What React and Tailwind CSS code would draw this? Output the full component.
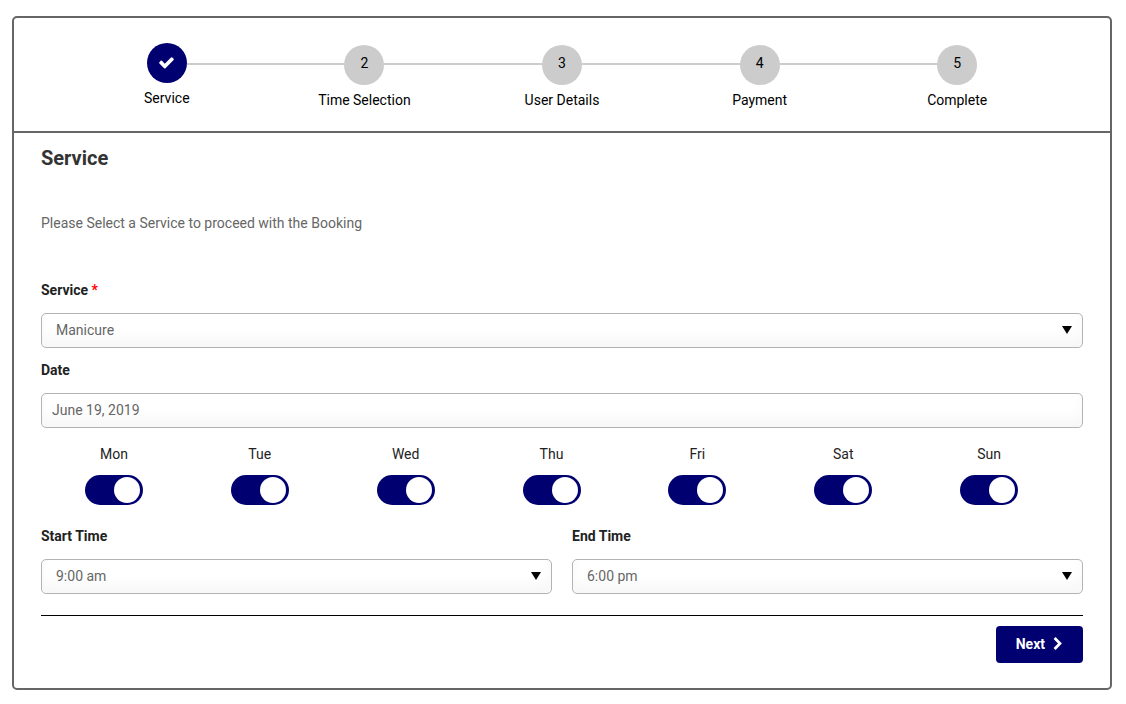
import React, { useState } from "react";

const steps = ["Service", "Time Selection", "User Details", "Payment", "Complete"];
const days = ["Mon", "Tue", "Wed", "Thu", "Fri", "Sat", "Sun"];
const times = ["8:00 am", "9:00 am", "10:00 am", "5:00 pm", "6:00 pm"];

const fieldClass =
  "block h-[35px] w-full appearance-none rounded-[5px] border border-[#b3b3b3] bg-white pb-0.5 text-sm text-[#666] shadow-[inset_0_-10px_12px_rgba(0,0,0,0.03)] outline-none focus:border-[#000070]";

function CheckIcon() {
  return (
    <svg viewBox="0 0 1792 1792" className="mb-0.5 size-[17px] fill-current" aria-hidden="true">
      <path d="M1671 566q0 40-28 68l-724 724-136 136q-28 28-68 28t-68-28l-136-136-362-362q-28-28-28-68t28-68l136-136q28-28 68-28t68 28l294 295 656-657q28-28 68-28t68 28l136 136q28 28 28 68z" />
    </svg>
  );
}

function ChevronIcon() {
  return (
    <svg viewBox="0 0 1280 1792" className="h-[14px] w-[10px] fill-current" aria-hidden="true">
      <path d="M1107 877l-742 742q-19 19-45 19t-45-19l-166-166q-19-19-19-45t19-45l531-531-531-531q-19-19-19-45t19-45l166-166q19-19 45-19t45 19l742 742q19 19 19 45t-19 45z" />
    </svg>
  );
}

function Step({ label, index }) {
  const done = index === 0;
  const last = index === steps.length - 1;
  return (
    <li className="flex flex-1 flex-col items-center" aria-current={done ? "step" : undefined}>
      <div className="flex w-full items-start">
        <span className={done ? "flex-1" : "mt-5 h-0.5 flex-1 bg-[#ccc]"} />
        {done ? (
          <span className="flex size-10 items-center justify-center rounded-full bg-[#000070] text-white">
            <CheckIcon />
          </span>
        ) : (
          <span className="mt-0.5 flex size-10 justify-center rounded-full bg-[#ccc] leading-9">{index + 1}</span>
        )}
        <span className={last ? "flex-1" : "mt-5 h-0.5 flex-1 bg-[#ccc]"} />
      </div>
      <span className="mt-[5px] leading-5">{label}</span>
    </li>
  );
}

function Select({ id, label, required, options, initial }) {
  return (
    <div className="min-w-0 flex-1">
      <label htmlFor={id} className="block font-bold leading-5 text-[#222]">
        {label}
        {required && <span className="text-[#f00]"> *</span>}
      </label>
      <div className="relative mt-[13px]">
        <select id={id} defaultValue={initial} className={fieldClass + " pr-8 pl-[14px]"}>
          {options.map((option) => (
            <option key={option}>{option}</option>
          ))}
        </select>
        <svg viewBox="0 0 10 8" className="pointer-events-none absolute top-[13px] right-[11px] h-2 w-[10px]" aria-hidden="true">
          <path d="M0 0h10L5 8z" />
        </svg>
      </div>
    </div>
  );
}

function DaySwitch({ day }) {
  const [on, setOn] = useState(true);
  return (
    <label className="flex flex-1 cursor-pointer flex-col items-center">
      <span className="leading-5 text-[#222]">{day}</span>
      <input
        type="checkbox"
        role="switch"
        checked={on}
        onChange={() => setOn(!on)}
        className="mt-[11px] flex h-[30px] w-[58px] cursor-pointer appearance-none items-center rounded-full bg-[#ccc] px-[3px] before:size-[26px] before:rounded-full before:bg-white checked:justify-end checked:bg-[#000070]"
      />
    </label>
  );
}

export default function App() {
  return (
    <main className="bg-white pt-4 pr-[14px] pb-[14px] pl-3 font-['Roboto',sans-serif] text-sm text-black">
      <form className="rounded-[5px] border-2 border-[#666]" onSubmit={(e) => e.preventDefault()}>
        <ol className="flex border-b-2 border-[#666] px-[54px] pt-[25px] pb-[21px]">
          {steps.map((label, index) => (
            <Step key={label} label={label} index={index} />
          ))}
        </ol>
        <div className="px-[27px] pt-[11px] pb-[25px]">
          <h1 className="text-xl font-bold leading-7 text-[#333]">Service</h1>
          <p className="mt-[41px] leading-5 text-[#666]">Please Select a Service to proceed with the Booking</p>

          <div className="mt-[47px] flex">
            <Select id="service" label="Service" required options={["Manicure", "Pedicure"]} initial="Manicure" />
          </div>

          <label htmlFor="date" className="mt-3 block font-bold leading-5 text-[#222]">
            Date
          </label>
          <input id="date" type="text" defaultValue="June 19, 2019" className={fieldClass + " mt-[13px] px-[10px]"} />

          <div className="mt-4 flex pr-[21px]">
            {days.map((day) => (
              <DaySwitch key={day} day={day} />
            ))}
          </div>

          <div className="mt-[21px] flex gap-5">
            <Select id="start" label="Start Time" options={times} initial="9:00 am" />
            <Select id="end" label="End Time" options={times} initial="6:00 pm" />
          </div>

          <hr className="mt-[21px] border-t border-black" />
          <div className="mt-[10px] flex justify-end">
            <button type="submit" className="flex h-[37px] items-center gap-2 rounded-[4px] bg-[#000070] px-5 pb-0.5 font-bold text-white">
              Next
              <ChevronIcon />
            </button>
          </div>
        </div>
      </form>
    </main>
  );
}
